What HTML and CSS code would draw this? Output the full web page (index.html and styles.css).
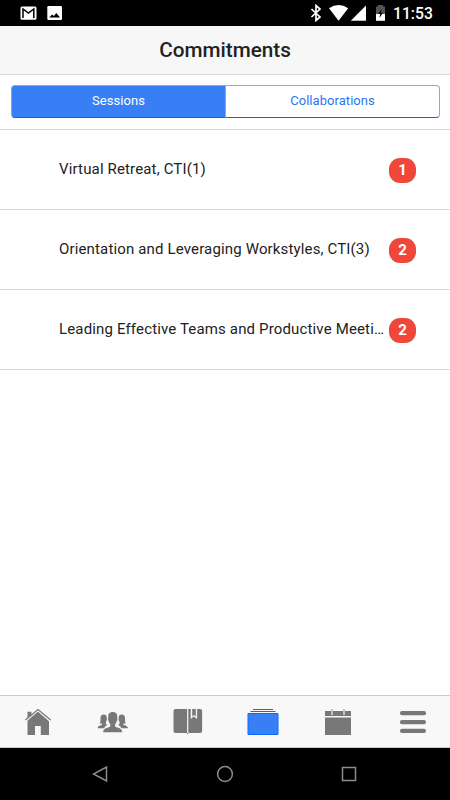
FILE: index.html
```html
<!DOCTYPE html>
<html lang="en">
<head>
    <meta charset="utf-8">
    <title>Commitments</title>
    <meta name="viewport" content="width=device-width, initial-scale=1">
    <link rel="stylesheet" href="styles.css">
</head>
<body>

<div class="status-bar">
    <svg class="status-left" width="44" height="16" viewBox="20 5 44 16">
        <rect x="20.5" y="6.5" width="16" height="13.2" rx="1.5" fill="#fff"/>
        <path d="M23 18V9l5.4 4 5.4-4v9" fill="none" stroke="#000" stroke-width="1.5"/>
        <rect x="47.3" y="6" width="14.7" height="14" rx="1.2" fill="#fff"/>
        <path d="M49.3 17.6l2.8-3.2 1.8 1.7 2.4-3 3.7 4.5z" fill="#000"/>
    </svg>
    <svg class="status-right" width="78" height="18" viewBox="308 4 78 18">
        <path d="M311.5 9l8.500 8-4 3.500V5.500l4 3.500-8.500 8" fill="none" stroke="#fff" stroke-width="1.7"/>
        <path d="M329 8.200q9.600-6.500 19.200 0L338.600 20.700z" fill="#fff"/>
        <path d="M366 5.500V20.700H350.800z" fill="#fff"/>
        <path d="M376 6.500h2V5h5v1.500h2V14h-9z" fill="#545454"/>
        <path d="M376 14h9v6.800h-9z" fill="#fff"/>
        <path d="M381.600 8.700l-3.500 5.400h2.100l-.8 4 3.600-5.400h-2.100z" fill="#000"/>
    </svg>
    <span class="clock">11:53</span>
</div>

<header class="header">
    <h1>Commitments</h1>
</header>

<div class="segment">
    <div class="segment-button active">Sessions</div>
    <div class="segment-button">Collaborations</div>
</div>

<ul class="list">
    <li>
        <span class="name">Virtual Retreat, CTI(1)</span>
        <span class="badge">1</span>
    </li>
    <li>
        <span class="name">Orientation and Leveraging Workstyles, CTI(3)</span>
        <span class="badge">2</span>
    </li>
    <li>
        <span class="name">Leading Effective Teams and Productive Meeti…</span>
        <span class="badge">2</span>
    </li>
</ul>

<nav class="tabs">
    <a class="tab">
        <svg width="32" height="32" viewBox="0 0 32 32">
            <path d="M5.500 15.500V5.800h4v4L16 5.300l11 10V29H18.800V20H13v9H5.500z"/>
            <path class="gap" d="M3 15.700L16 4.800l13 10.900"/>
            <path class="roof" d="M3.300 13.900L16 3.600l12.700 10.300"/>
        </svg>
    </a>
    <a class="tab">
        <svg width="32" height="32" viewBox="0 0 32 32">
            <path d="M.6 22.300c0-2 1.500-2.500 4-3.300.7-.3.600-.8.200-1.500H2.600c.8-1.100.9-2.600.9-5.100 0-2.600 1-3.800 3.200-3.800s3.300 1.500 3.200 4.200c-.1 1.600-.4 2.800-1 3.700-.3 1-.1 1.600 1.600 2.200l-2.200 1.500-1.200 2.100z"/>
            <path d="M30.900 22.300c0-2-1.500-2.500-4-3.300-.7-.3-.6-.8-.2-1.500h2.200c-.8-1.100-.9-2.600-.9-5.100 0-2.600-1-3.800-3.200-3.800s-3.300 1.500-3.200 4.200c.1 1.600.4 2.800 1 3.700.3 1 .1 1.600-1.600 2.200l2.200 1.500 1.200 2.100z"/>
            <path d="M6.200 26.300c.1-3.500 2.200-4 5-4.800 2.200-.7 2.500-1.300 2-3.200-.9-.9-1.300-2.100-1.500-3.300-.9-.5-1-2.200-.4-2.800-.5-4.100.9-6.200 4.400-6.200s5 2.100 4.500 6.200c.6.700.4 2.300-.5 2.900-.2 1.200-.6 2.300-1.500 3.200-.5 1.900-.2 2.500 2 3.200 2.800.8 4.900 1.300 5 4.800z"/>
        </svg>
    </a>
    <a class="tab">
        <svg width="32" height="32" viewBox="0 0 32 32">
            <path d="M3.500 3h11.600v24H3.500q-2 0-2-2V5q0-2 2-2z"/>
            <path d="M16.300 3h2.400v10l3.200-2.600 3.200 2.600V3h3q2 0 2 2v20q0 2-2 2H16.300l-.7 1.800-.8-1.800h1.500z"/>
            <path d="M20.200 3h3.600v7.500l-1.900-1.500-1.700 1.500z"/>
        </svg>
    </a>
    <a class="tab active">
        <svg width="32" height="32" viewBox="0 0 32 32">
            <path d="M1 7h30v22H1z"/>
            <path class="edge" d="M1 7.500h30v21H1z"/>
            <path class="lid" d="M6 3.500h20M3.500 5.500h25"/>
        </svg>
    </a>
    <a class="tab">
        <svg width="32" height="32" viewBox="0 0 32 32">
            <path d="M3 5h26v5H3zM3 11.500h26V29H3z"/>
            <path class="ring" d="M10 3v6M22 3v6"/>
        </svg>
    </a>
    <a class="tab">
        <svg width="32" height="32" viewBox="0 0 32 32">
            <rect x="3" y="5" width="26" height="4.300" rx="2"/>
            <rect x="3" y="13.900" width="26" height="4.300" rx="2"/>
            <rect x="3" y="22.800" width="26" height="4.300" rx="2"/>
        </svg>
    </a>
</nav>

<div class="nav-bar">
    <svg width="18" height="18" viewBox="0 0 18 18"><path d="M14.500 2v14L1.500 9z"/></svg>
    <svg width="18" height="18" viewBox="0 0 18 18"><circle cx="9" cy="9" r="7.400"/></svg>
    <svg width="18" height="18" viewBox="0 0 18 18"><path d="M2.500 2.500h13v13h-13z"/></svg>
</div>

</body>
</html>
```
FILE: styles.css
```css
* {
    box-sizing: border-box;
}

body {
    display: flex;
    flex-direction: column;
    height: 100vh;
    margin: 0;
    background: #fff;
    color: #222;
    font: normal 15px/20px Roboto, sans-serif;
}

svg {
    display: block;
    flex: none;
}

.status-bar {
    display: flex;
    align-items: center;
    height: 26px;
    padding: 0 17px 0 20px;
    background: #000;
    color: #fff;
}

    .status-right {
        margin-left: auto;
    }

    .clock {
        width: 40px;
        margin: 1px 0 0 7px;
        font-size: 15.7px;
        font-weight: 500;
        white-space: nowrap;
    }

.header {
    height: 49px;
    border-bottom: 1px solid #d9d9d9;
    background: #f7f7f7;
}

    .header h1 {
        margin: 0;
        font-size: 20.7px;
        font-weight: 500;
        line-height: 48px;
        text-align: center;
    }

.segment {
    display: flex;
    height: 55px;
    padding: 10px 10px 11px 11px;
    border-bottom: 1px solid #d5d5d5;
}

    .segment-button {
        flex: 1;
        border: 1px solid #7fa9f8;
        border-bottom-color: #0a60ff;
        border-left-width: 0;
        border-radius: 0 4px 4px 0;
        color: #2f74ee;
        font-size: 13px;
        letter-spacing: 0.05px;
        line-height: 30px;
        text-align: center;
    }

    .segment-button.active {
        border-left-width: 1px;
        border-radius: 4px 0 0 4px;
        background: #387ef5;
        color: #fff;
    }

.list {
    flex: 1;
    margin: 0;
    padding: 0;
    list-style: none;
}

    .list li {
        display: flex;
        align-items: center;
        height: 80px;
        padding: 0 34px 0 59px;
        border-bottom: 1px solid #d8d8d8;
    }

    .list .name {
        flex: 1;
        margin-bottom: 2px;
        letter-spacing: 0.15px;
        white-space: nowrap;
    }

    .list .badge {
        width: 27px;
        height: 25px;
        margin-top: 2px;
        border-radius: 11px;
        background: #ef473a;
        color: #fff;
        font-weight: 700;
        line-height: 24px;
        text-align: center;
    }

.tabs {
    display: flex;
    height: 53px;
    border-top: 1px solid #cbcbcb;
    border-bottom: 1px solid #cbcbcb;
    background: #f8f8f8;
}

    .tab {
        display: flex;
        flex: 1;
        justify-content: center;
        padding-top: 10px;
        fill: #787878;
    }

    .tab.active {
        fill: #387ef5;
    }

    .tab .roof,
    .tab .gap,
    .tab .ring,
    .tab .edge,
    .tab .lid {
        fill: none;
        stroke: #787878;
        stroke-width: 1.3;
    }

    .tab .gap {
        stroke: #f8f8f8;
    }

    .tab .ring {
        stroke: #c4c4c4;
        stroke-width: 2;
    }

    .tab .edge,
    .tab .lid {
        stroke: #0a6cff;
        stroke-width: 1;
    }

.nav-bar {
    display: flex;
    align-items: center;
    justify-content: space-between;
    height: 52px;
    padding: 0 92px;
    background: #000;
}

    .nav-bar svg {
        fill: none;
        stroke: #8c8c8c;
        stroke-width: 1.5;
    }
```
